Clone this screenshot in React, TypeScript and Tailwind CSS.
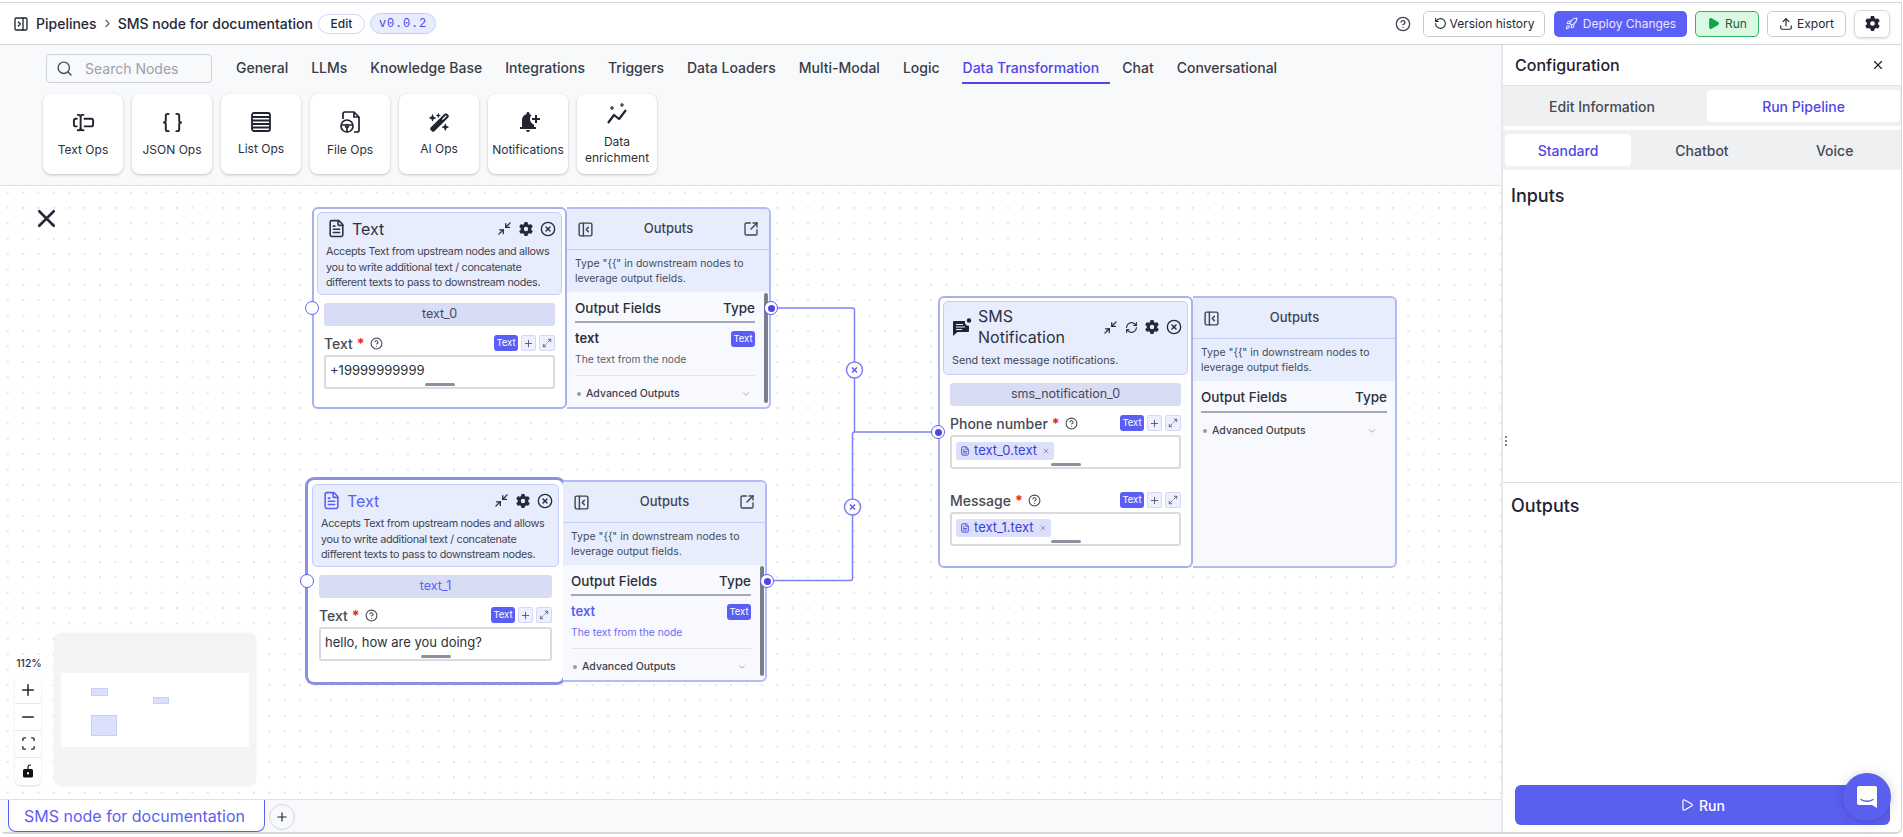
import {
  Braces,
  ChevronDown,
  ChevronRight,
  CircleHelp,
  CircleX,
  FileText,
  Maximize2,
  Minimize2,
  Minus,
  PanelLeftClose,
  PanelRightClose,
  Play,
  Plus,
  RefreshCw,
  Rocket,
  RotateCcw,
  Scan,
  Search,
  SquareArrowOutUpRight,
  TextCursorInput,
  Upload,
  X,
} from "lucide-react";
import { FaGear, FaWandMagicSparkles } from "react-icons/fa6";
import { MdNotificationAdd } from "react-icons/md";
import type { ReactNode } from "react";

const tabs = [
  "General",
  "LLMs",
  "Knowledge Base",
  "Integrations",
  "Triggers",
  "Data Loaders",
  "Multi-Modal",
  "Logic",
  "Data Transformation",
  "Chat",
  "Conversational",
];

function ListIcon() {
  return (
    <svg width="22" height="22" viewBox="0 0 22 22" fill="none" stroke="#1f2430" strokeWidth="1.8">
      <rect x="2" y="2" width="18" height="18" rx="2" />
      <path d="M2 6h18M2 9.5h18M2 13h18M2 16.5h18" />
    </svg>
  );
}

function FileOpsIcon() {
  return (
    <svg width="24" height="24" viewBox="0 0 24 24" fill="none" stroke="#1f2430" strokeWidth="1.7">
      <path d="M5 9V4a2 2 0 0 1 2-2h9l5 5v13a2 2 0 0 1-2 2h-3" />
      <path d="M16 2v5h5" />
      <circle cx="9" cy="16" r="6" />
      <circle cx="9" cy="16" r="1.4" />
      <path d="M3.5 15h4M10.5 15h4M9 17.5V22" />
    </svg>
  );
}

function EnrichIcon() {
  return (
    <svg width="24" height="24" viewBox="0 0 24 24" fill="none" stroke="#1f2430" strokeWidth="2.2">
      <path d="M3 21l6-8 5 4 7-9" strokeLinejoin="round" />
      <path d="M5 6h4M7 4v4M15 3h4M17 1v4" strokeWidth="1.2" />
    </svg>
  );
}

function ChatIcon() {
  return (
    <svg width="20" height="20" viewBox="0 0 20 20">
      <path d="M2 4h11v1.5a3 3 0 0 0 4 3V14a1 1 0 0 1-1 1H5.5L1 19V5a1 1 0 0 1 1-1z" fill="#1f2430" />
      <circle cx="17" cy="3.5" r="2.2" fill="#1f2430" />
      <path d="M4 7.5h7M4 10h9M4 12.5h6" stroke="#e8edfd" strokeWidth="1.1" />
    </svg>
  );
}

function Card({ icon, label }: { icon: ReactNode; label: string }) {
  return (
    <div className="flex h-[80px] w-[80px] flex-col items-center justify-center gap-[8px] rounded-lg bg-white text-center text-[12px] leading-[16px] text-[#2b303b] shadow-[0_1px_3px_rgba(0,0,0,0.22)]">
      {icon}
      <span>{label}</span>
    </div>
  );
}

function Handle({ className, filled }: { className: string; filled?: boolean }) {
  return (
    <div
      className={`absolute z-20 flex size-[14px] items-center justify-center rounded-full border-[1.5px] border-[#5b5ef4] bg-white ${className}`}
    >
      {filled && <div className="size-[7px] rounded-full bg-[#4f46e5]" />}
    </div>
  );
}

function Field({ label, children, gapClass }: { label: string; children: ReactNode; gapClass?: string }) {
  return (
    <div className={gapClass}>
      <div className="flex h-[20px] items-center">
        <span className="text-[14px] font-medium text-[#454a55]">{label}</span>
        <span className="ml-[4px] text-[14px] font-bold text-[#ef1c1c]">*</span>
        <CircleHelp size={13} className="ml-[5px] text-[#454a55]" />
        <div className="ml-auto flex items-center gap-[3px]">
          <span className="flex h-[16px] w-[24px] items-center justify-center rounded-[3px] bg-[#5b5ef4] text-[9.5px] text-white">
            Text
          </span>
          <span className="flex h-[16px] w-[15px] items-center justify-center rounded-[2px] border border-[#d3d9f8] bg-[#eef1fd] text-[#555a66]">
            <Plus size={11} />
          </span>
          <span className="flex h-[16px] w-[16px] items-center justify-center rounded-[2px] border border-[#d3d9f8] bg-[#eef1fd] text-[#555a66]">
            <Maximize2 size={10} />
          </span>
        </div>
      </div>
      <div className="relative mt-[2px] flex h-[34px] items-start rounded-[3px] border-2 border-[#d9dbe0] bg-white px-[4px] pt-[4px]">
        {children}
        <div className="absolute bottom-[1px] left-1/2 h-[3px] w-[30px] -translate-x-1/2 rounded bg-[#8d909c]" />
      </div>
    </div>
  );
}

function Chip({ label }: { label: string }) {
  return (
    <span className="mt-[1px] flex h-[18px] items-center gap-[4px] rounded-[3px] bg-[#dde0fa] pl-[4px] pr-[4px] text-[13px] text-[#3a3fd8]">
      <FileText size={10} />
      {label}
      <X size={8} className="ml-[1px] text-[#6d7080]" />
    </span>
  );
}

function Outputs({ children, heightClass, active }: { children?: ReactNode; heightClass: string; active?: boolean }) {
  return (
    <div className={`relative w-[204px] overflow-hidden rounded-r-[6px] border-2 border-l-0 border-[#b3bbf5] bg-[#f8f9fe] ${heightClass}`}>
      <div className="flex h-[41px] items-center justify-between border-b border-[#c3cdfa] bg-[#e8edfd] px-[10px] text-[#3f4451]">
        <PanelLeftClose size={17} />
        <span className="text-[13px] font-medium">Outputs</span>
        {children ? <SquareArrowOutUpRight size={16} /> : <span className="w-[16px]" />}
      </div>
      <div className="h-[42px] bg-[#e8edfd] px-[8px] pt-[6px] text-[10.5px] leading-[15px] text-[#464b57]">
        {'Type "{{" in downstream nodes to leverage output fields.'}
      </div>
      <div className={`ml-[8px] flex items-center justify-between border-b-2 border-[#a6a9b3] pt-[3px] text-[13.5px] font-medium text-[#2b303b] ${children ? "mr-[14px] h-[31px]" : "mr-[8px] h-[32px]"}`}>
        <span>Output Fields</span>
        <span>Type</span>
      </div>
      {children && (
        <div className="mx-[8px] mr-[14px] border-b border-[#e4e5ea] pb-[8px] pt-[7px]">
          <div className="flex h-[18px] items-center justify-between">
            <span className={`text-[13px] font-semibold ${active ? "text-[#5b5ef4]" : "text-[#2b303b]"}`}>text</span>
            <span className="flex h-[16px] w-[24px] items-center justify-center rounded-[3px] bg-[#5b5ef4] text-[9.5px] text-white">
              Text
            </span>
          </div>
          <div className={`mt-[4px] text-[10.3px] leading-[15px] ${active ? "text-[#6a6df5]" : "text-[#5a5f6b]"}`}>
            The text from the node
          </div>
        </div>
      )}
      <div className="mx-[10px] mr-[18px] flex h-[36px] items-center gap-[5px] text-[10.5px] font-medium text-[#3c414d]">
        <span className="size-[4px] rounded-full bg-[#9a9da8]" />
        Advanced Outputs
        <ChevronDown size={10} className="ml-auto text-[#9a9da8]" />
      </div>
      {children && <div className="absolute bottom-[4px] right-[1px] top-[84px] w-[4px] rounded bg-[#7a7d8a]" />}
    </div>
  );
}

function TextNode({ position, name, value, active }: { position: string; name: string; value: string; active?: boolean }) {
  return (
    <div className={`absolute z-10 flex ${position}`}>
      <div
        className={`relative h-[202px] w-[255px] rounded-[6px] bg-white p-[3px] ${
          active ? "px-[4px] py-[4px] shadow-[0_0_0_3px_#8b90e2]" : "border-2 border-[#a8b1f0]"
        }`}
      >
        <div className="h-[83px] rounded-[5px] border border-[#c3cdfa] bg-[#e8edfd] px-[8px]">
          <div className="flex h-[31px] items-center">
            <FileText size={19} className={`ml-[1px] ${active ? "text-[#5b5ef4]" : "text-[#2d3240]"}`} />
            <span className={`ml-[6px] text-[16px] ${active ? "text-[#5b5ef4]" : "text-[#2d3240]"}`}>Text</span>
            <div className="-mr-[3px] ml-auto flex items-center gap-[7px] text-[#252a36]">
              <Minimize2 size={15} />
              <FaGear size={14} />
              <CircleX size={16} />
            </div>
          </div>
          <p className="whitespace-nowrap text-[10.8px] leading-[15.5px] tracking-[-0.3px] text-[#3f4451]">
            Accepts Text from upstream nodes and allows
            <br />
            you to write additional text / concatenate
            <br />
            different texts to pass to downstream nodes.
          </p>
        </div>
        <div className="mx-[7px] mt-[8px]">
          <div className={`flex h-[23px] items-center justify-center rounded-[3px] bg-[#d9dcf5] text-[12.5px] ${active ? "text-[#5b5ef4]" : "text-[#454a55]"}`}>
            {name}
          </div>
          <Field label="Text" gapClass="mt-[7px]">
            <span className="text-[13px] text-[#2b303b]">{value}</span>
          </Field>
        </div>
      </div>
      <Outputs heightClass="h-[202px]" active={active}>
        <span />
      </Outputs>
    </div>
  );
}

function SmsNode() {
  return (
    <div className="absolute left-[938px] top-[110px] z-10 flex">
      <div className="h-[272px] w-[255px] rounded-[6px] border-2 border-[#a8b1f0] bg-white p-[3px]">
        <div className="h-[74px] rounded-[5px] border border-[#c3cdfa] bg-[#e8edfd] px-[8px]">
          <div className="flex h-[50px] items-center">
            <ChatIcon />
            <span className="ml-[6px] w-[100px] text-[16px] leading-[21px] text-[#2d3240]">SMS Notification</span>
            <div className="-mr-[3px] ml-auto flex items-center gap-[7px] text-[#252a36]">
              <Minimize2 size={15} />
              <RefreshCw size={13} />
              <FaGear size={14} />
              <CircleX size={16} />
            </div>
          </div>
          <p className="mt-[1px] text-[10.8px] leading-[15px] text-[#3f4451]">Send text message notifications.</p>
        </div>
        <div className="mx-[7px] mt-[8px]">
          <div className="flex h-[23px] items-center justify-center rounded-[3px] bg-[#d9dcf5] text-[12.5px] text-[#454a55]">
            sms_notification_0
          </div>
          <Field label="Phone number" gapClass="mt-[7px]">
            <Chip label="text_0.text" />
          </Field>
          <Field label="Message" gapClass="mt-[21px]">
            <Chip label="text_1.text" />
          </Field>
        </div>
      </div>
      <Outputs heightClass="h-[272px]" />
    </div>
  );
}

function Edges() {
  return (
    <svg className="absolute left-0 top-0 h-[614px] w-[1501px]" viewBox="0 186 1501 614" fill="none" stroke="#7d82f5" strokeWidth="1.5">
      <path d="M771 308H852.5a2 2 0 0 1 2 2V432H938" />
      <path d="M766 580.5H850.5a2 2 0 0 0 2-2V434a2 2 0 0 1 2-2" />
      <g fill="#fff">
        <circle cx="854.5" cy="370" r="8" />
        <circle cx="852.5" cy="507" r="8" />
      </g>
      <path d="M852 367.500l5 5M857 367.500l-5 5M850 504.500l5 5M855 504.500l-5 5" stroke="#5b5ef4" strokeWidth="1.5" />
    </svg>
  );
}

function Canvas() {
  return (
    <div className="relative flex-1 bg-white bg-[radial-gradient(circle,#ccd2e2_0.6px,transparent_0.8px)] bg-[size:15.4px_15.4px] bg-[position:0px_-1.2px]">
      <X size={29} strokeWidth={2.2} className="absolute left-[32px] top-[18px] text-[#252a36]" />
      <Edges />
      <TextNode position="left-[312px] top-[21px]" name="text_0" value="+19999999999" />
      <TextNode position="left-[308px] top-[294px]" name="text_1" value="hello, how are you doing?" active />
      <SmsNode />
      <Handle className="left-[305px] top-[115px]" />
      <Handle className="left-[764px] top-[115px]" filled />
      <Handle className="left-[300px] top-[388px]" />
      <Handle className="left-[760px] top-[388px]" filled />
      <Handle className="left-[931px] top-[239px]" filled />

      <div className="absolute left-[15px] top-[470px] w-[26px] text-center">
        <div className="-ml-[2px] w-[32px] text-[10.5px] font-medium text-[#2b303b]">112%</div>
        <div className="mt-[5px] flex flex-col divide-y divide-[#e8e8ea] rounded-md bg-white text-[#1f2430] shadow-sm">
          <div className="flex h-[27px] items-center justify-center"><Plus size={18} /></div>
          <div className="flex h-[27px] items-center justify-center"><Minus size={18} /></div>
          <div className="flex h-[27px] items-center justify-center"><Scan size={15} strokeWidth={2.2} /></div>
          <div className="flex h-[27px] items-center justify-center">
            <svg width="12" height="14" viewBox="0 0 12 14">
              <path d="M6 5V3a2 2 0 0 1 3-1.700" fill="none" stroke="#111" strokeWidth="1.2" />
              <rect x="1" y="5" width="10" height="8.500" rx="1.500" fill="#111" />
              <rect x="5" y="8" width="2" height="2.500" rx="1" fill="#fff" />
            </svg>
          </div>
        </div>
      </div>

      <div className="absolute left-[54px] top-[447px] flex h-[153px] w-[202px] items-center justify-center rounded-lg bg-[#f4f4f4] shadow-[0_0_2px_rgba(0,0,0,0.08)]">
        <div className="relative h-[74px] w-[188px] bg-white">
          <div className="absolute left-[30px] top-[15px] h-[8px] w-[17px] border border-[#c8cffa] bg-[#dbe0fb]" />
          <div className="absolute left-[92px] top-[24px] h-[7px] w-[16px] border border-[#c8cffa] bg-[#dbe0fb]" />
          <div className="absolute left-[30px] top-[42px] h-[21px] w-[26px] border border-[#c8cffa] bg-[#dbe0fb]" />
        </div>
      </div>
    </div>
  );
}

function TopBar() {
  return (
    <header className="flex h-[42px] shrink-0 items-center border-b border-[#d5d7dc] bg-white pl-[13px] pr-[11px] text-[14px] text-[#252a36]">
      <PanelRightClose size={16} className="text-[#1f2430]" />
      <span className="ml-[7px] font-medium">Pipelines</span>
      <ChevronRight size={13} className="mx-[4px] text-[#5a5f6b]" />
      <span className="font-medium">SMS node for documentation</span>
      <span className="ml-[5px] flex h-[20px] w-[47px] items-center justify-center rounded-full border border-[#d3d9f8] text-[12px] font-medium">
        Edit
      </span>
      <span className="ml-[5px] flex h-[21px] w-[66px] items-center justify-center rounded-full border border-[#c3cdfa] bg-[#e8edfd] text-[12px] tracking-[0.8px] text-[#4f46e5] [font-family:'Liberation_Mono',monospace]">
        v0.0.2
      </span>
      <CircleHelp size={16} className="ml-auto text-[#3f4451]" />
      <button className="ml-[12px] flex h-[26px] w-[122px] items-center justify-center gap-[3px] rounded-[5px] border border-[#c9cbd1] text-[12px]">
        <RotateCcw size={13} /> Version history
      </button>
      <button className="ml-[9px] flex h-[26px] w-[133px] items-center justify-center gap-[5px] rounded-[5px] bg-[#5b5ff5] text-[12px] text-[#e5e6ff]">
        <Rocket size={13} /> Deploy Changes
      </button>
      <button className="ml-[8px] flex h-[26px] w-[64px] items-center justify-center gap-[5px] rounded-[5px] border border-[#2fb35f] bg-[#d9f9e3] text-[12px] text-[#1b5e33]">
        <Play size={13} fill="#16a34a" className="text-[#16a34a]" /> Run
      </button>
      <button className="ml-[8px] flex h-[26px] w-[79px] items-center justify-center gap-[4px] rounded-[5px] border border-[#c9cbd1] text-[12px]">
        <Upload size={14} /> Export
      </button>
      <button className="ml-[8px] flex h-[28px] w-[36px] items-center justify-center rounded-[6px] border border-[#d5d7dc] shadow-sm">
        <FaGear size={15} className="text-[#1f2430]" />
      </button>
    </header>
  );
}

function Toolbar() {
  return (
    <div className="h-[141px] shrink-0 border-b border-[#dfe1e6] bg-[#f8f9fb] pl-[43px] pt-[9px] shadow-[0_1px_2px_rgba(0,0,0,0.06)]">
      <div className="flex h-[29px] items-center">
        <div className="ml-[3px] flex h-[29px] w-[166px] items-center rounded-[4px] border border-[#cfd2d9] pl-[9px] text-[14px] text-[#9aa0ad]">
          <Search size={17} className="text-[#4b505c]" />
          <span className="ml-[12px]">Search Nodes</span>
        </div>
        <nav className="-mt-[2px] ml-[24px] flex items-center gap-[23px] text-[14px] font-medium text-[#373c48]">
          {tabs.map((t) =>
            t === "Data Transformation" ? (
              <span key={t} className="relative text-[#4f46e5]">
                {t}
                <span className="absolute -bottom-[6px] -left-[1px] -right-[11px] h-[2px] bg-[#4f46e5]" />
              </span>
            ) : (
              <span key={t}>{t}</span>
            ),
          )}
        </nav>
      </div>
      <div className="mt-[11px] flex gap-[9px]">
        <Card icon={<TextCursorInput size={23} className="text-[#1f2430]" />} label="Text Ops" />
        <Card icon={<Braces size={23} className="text-[#1f2430]" />} label="JSON Ops" />
        <Card icon={<ListIcon />} label="List Ops" />
        <Card icon={<FileOpsIcon />} label="File Ops" />
        <Card icon={<FaWandMagicSparkles size={21} className="text-[#1f2430]" />} label="AI Ops" />
        <Card icon={<MdNotificationAdd size={24} className="text-[#1f2430]" />} label="Notifications" />
        <Card icon={<EnrichIcon />} label="Data enrichment" />
      </div>
    </div>
  );
}

function RightPanel() {
  return (
    <aside className="relative flex w-[400px] shrink-0 flex-col rounded-br-[6px] border-l-2 border-[#e7e8ec] bg-white">
      <div className="flex h-[41px] shrink-0 items-center justify-between border-b border-[#e0e2e6] pl-[12px] pr-[16px]">
        <span className="text-[16px] font-medium text-[#1f2430]">Configuration</span>
        <X size={14} className="text-[#1f2430]" />
      </div>
      <div className="grid h-[40px] shrink-0 grid-cols-[204px_1fr] items-center bg-[#eff0f2] text-[14px] font-medium">
        <span className="pr-[6px] text-center text-[#444955]">Edit Information</span>
        <span className="mr-[1px] flex h-[32px] items-center justify-center rounded bg-white text-[#4f46e5]">Run Pipeline</span>
      </div>
      <div className="mt-[4px] grid h-[40px] shrink-0 grid-cols-3 items-center bg-[#eff0f2] text-[14px] font-medium">
        <span className="ml-[2px] flex h-[32px] w-[126px] items-center justify-center rounded bg-white text-[#4f46e5]">Standard</span>
        <span className="text-center text-[#444955]">Chatbot</span>
        <span className="text-center text-[#444955]">Voice</span>
      </div>
      <div className="flex h-[313px] shrink-0 border-b border-[#dcdee3] pl-[8px] pt-[14px] text-[18px] font-medium leading-[24px] text-[#1f2430]">
        Inputs
      </div>
      <div className="flex-1 pl-[8px] pt-[11px] text-[18px] font-medium leading-[24px] text-[#1f2430]">Outputs</div>
      <div className="absolute left-[2px] top-[391px] flex flex-col gap-[2px]">
        <span className="size-[2px] rounded-full bg-[#555a66]" />
        <span className="size-[2px] rounded-full bg-[#555a66]" />
        <span className="size-[2px] rounded-full bg-[#555a66]" />
      </div>
      <button className="absolute bottom-[7px] left-[12px] flex h-[40px] w-[375px] items-center justify-center gap-[5px] rounded-md bg-[#5b5ff0] text-[14px] font-medium text-white">
        <Play size={14} /> Run
      </button>
      <div className="absolute bottom-[11px] right-[10px] flex size-[48px] items-center justify-center rounded-full bg-[#5b5ff0] shadow-[0_1px_12px_rgba(0,0,0,0.18)]">
        <svg width="22" height="24" viewBox="0 0 22 24">
          <path d="M3 1h16a2 2 0 0 1 2 2v20l-5-3H3a2 2 0 0 1-2-2V3a2 2 0 0 1 2-2z" fill="#fff" />
          <path d="M5 14.500c3 2.300 9 2.300 12 0" fill="none" stroke="#5b5ff0" strokeWidth="1.400" strokeLinecap="round" />
        </svg>
      </div>
    </aside>
  );
}

export default function App() {
  return (
    <div className="h-[837px] w-[1903px] overflow-hidden bg-white pb-[3px] pr-[1px] pt-[2px] [font-family:Inter,sans-serif]">
      <div className="flex h-full flex-col rounded-b-[6px] border-r border-t border-b-2 border-[#d5d7dc]">
        <TopBar />
        <div className="flex min-h-0 flex-1">
          <div className="flex min-w-0 flex-1 flex-col">
            <Toolbar />
            <Canvas />
            <div className="flex h-[33px] shrink-0 border-t border-[#dfe1e6] bg-[#f8f9fb]">
              <div className="ml-[8px] flex h-[32px] w-[257px] items-center justify-center rounded-b-lg border border-t-0 border-[#5b5ef4] bg-white pr-[4px] text-[16px] text-[#5b5ff0]">
                SMS node for documentation
              </div>
              <div className="ml-[4px] mt-[4px] flex size-[26px] items-center justify-center rounded-full border border-[#d5d7dc]">
                <Plus size={14} className="text-[#1f2430]" />
              </div>
            </div>
          </div>
          <RightPanel />
        </div>
      </div>
    </div>
  );
}
